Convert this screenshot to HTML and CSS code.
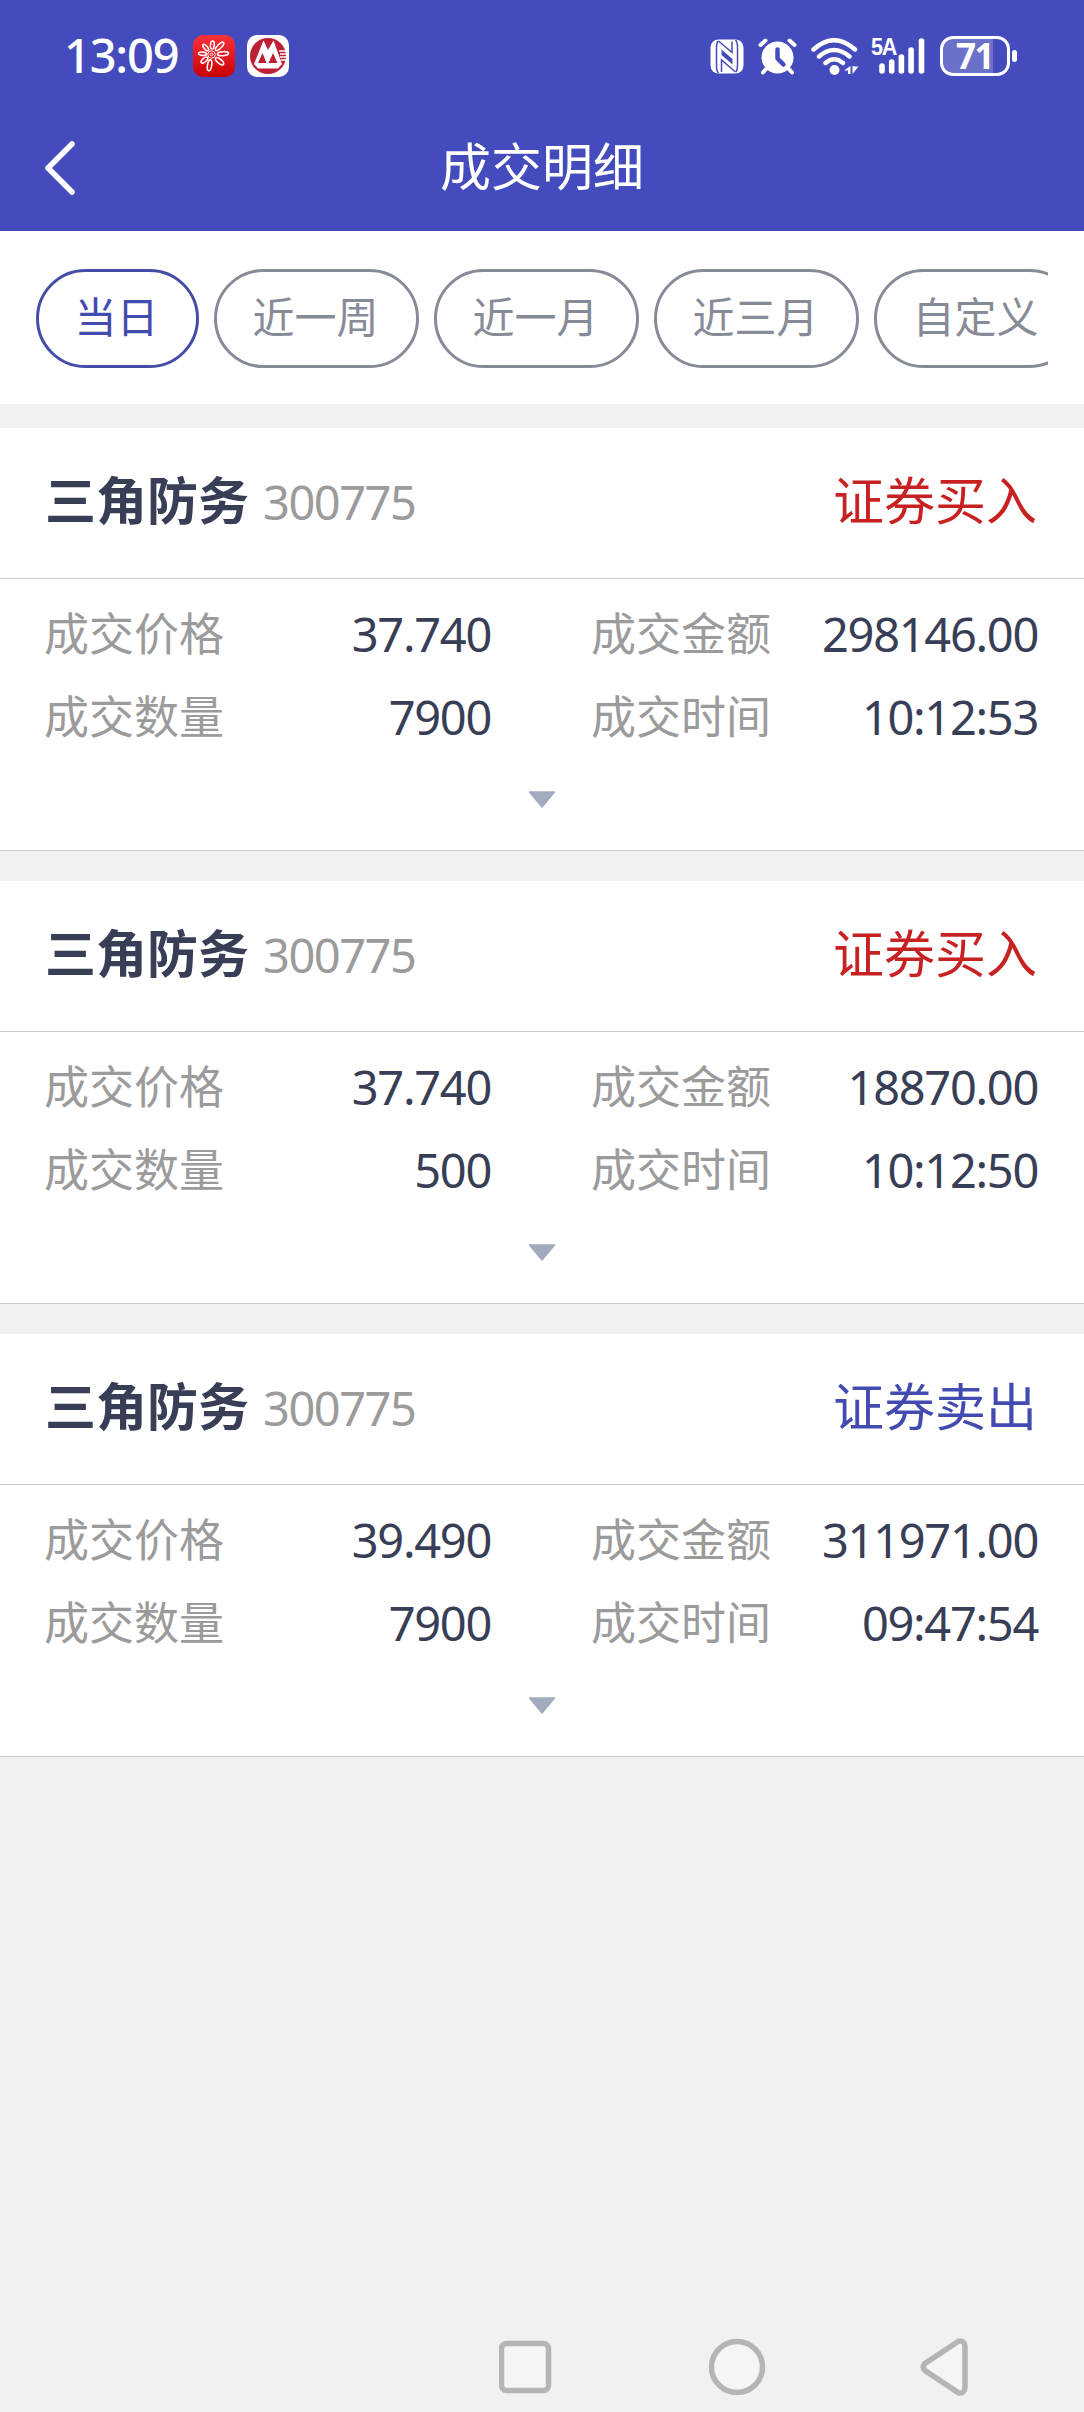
FILE: index.html
```html
<!DOCTYPE html>
<html lang="zh-CN">
<head>
<meta charset="utf-8">
<title>成交明细</title>
<link rel="stylesheet" href="styles.css">
</head>
<body>
<div class="screen">
  <header class="top">
    <div class="status">
      <span class="clock">13:09</span>
      <svg class="app" width="42" height="42" viewBox="0 0 42 42">
        <defs><linearGradient id="r" x1="0" y1="0" x2="0" y2="1"><stop offset="0" stop-color="#fb3238"/><stop offset="1" stop-color="#c90206"/></linearGradient></defs>
        <rect width="42" height="42" rx="10" fill="url(#r)"/>
        <g transform="translate(18.500 19.500)" fill="none" stroke="#fff" stroke-width="1.600">
          <ellipse cy="-9.500" rx="1.900" ry="4" transform="rotate(5)"/>
          <ellipse cy="-11.500" rx="2" ry="5.500" transform="rotate(45)"/>
          <ellipse cy="-11.500" rx="2" ry="5.500" transform="rotate(86)"/>
          <ellipse cy="-10.500" rx="2.100" ry="5" transform="rotate(130)"/>
          <ellipse cy="-11" rx="2.100" ry="5.500" transform="rotate(190)"/>
          <ellipse cy="-9" rx="1.900" ry="4" transform="rotate(232)"/>
          <ellipse cy="-9" rx="1.700" ry="4" transform="rotate(275)"/>
          <ellipse cy="-9" rx="1.700" ry="4" transform="rotate(320)"/>
          <circle r="3.700" stroke-width="1"/>
          <circle r="1.400" stroke-width="1"/>
        </g>
      </svg>
      <svg class="app" width="42" height="42" viewBox="0 0 42 42">
        <rect width="42" height="42" rx="10" fill="#fff"/>
        <circle cx="21" cy="21" r="18" fill="#bd1f35"/>
        <path d="M7 29 16.500 5.500 21 15 26.500 5.500 35 29 31 33.500H11z" fill="#fff"/>
        <path d="M11 28 15.500 18 19.500 28zM21.500 28 26 18 30.500 28z" fill="#bd1f35"/>
        <path d="M32 16h9M33 19h8M33 22h8M34 25h7" stroke="#fff" stroke-width="1.300"/>
      </svg>
      <div class="system">
        <svg width="34" height="35" viewBox="0 0 34 35">
          <rect x=".5" y=".5" width="33" height="34" rx="8" fill="#fff"/>
          <path d="M8 2Q6.500 4 6.500 9V27Q6.500 32 8.500 34M26 33Q27.500 31 27.500 26V8Q27.500 3 25.500 1" fill="none" stroke="#434bbd" stroke-width="1.500"/>
          <path d="M8.500 2 22 13.500V2.500M25.500 33 11.500 21V33" fill="none" stroke="#434bbd" stroke-width="1.500"/>
          <path d="M11.500 10.500 22.500 20v5.500L11.500 16z" fill="#434bbd"/>
        </svg>
        <svg class="alarm" width="39" height="37" viewBox="0 0 39 37">
          <circle cx="19.500" cy="19.500" r="16" fill="#fff"/>
          <path d="M2.500 7 7.500 2.500M36.500 7 31.500 2.500M5 34.500 9 30M34 34.500 30 30" stroke="#fff" stroke-width="4" stroke-linecap="round"/>
          <path d="M19.500 11.500v9l6 6" fill="none" stroke="#434bbd" stroke-width="4.500" stroke-linecap="round" stroke-linejoin="round"/>
        </svg>
        <svg class="wifi" width="48" height="37" viewBox="0 0 48 37">
          <g fill="none" stroke="#fff" stroke-width="4.400" stroke-linecap="round">
            <path d="M2.500 11.500Q23 -7 44 11.500M8 18.500Q23 5.500 38.500 18.500M14.500 25Q23 17.500 32 25"/>
          </g>
          <circle cx="23.500" cy="32" r="5" fill="#fff"/>
          <path d="M39.500 28v8H37v-3.500h-4zM41.500 28v8l6-7.500h-3.500z" fill="#fff"/>
        </svg>
        <div class="signal">
          <span class="net">5A</span>
          <svg width="46" height="36" viewBox="0 0 46 36"><path d="M3 28v5M12.700 24v9M22.400 19v14M32.100 12v21M42.500 3v30" stroke="#fff" stroke-width="5.600" stroke-linecap="round"/></svg>
        </div>
        <div class="battery"><span class="level">71</span></div><i class="cap"></i>
      </div>
    </div>
    <div class="titlebar">
      <svg class="back" width="34" height="56" viewBox="0 0 34 56"><path d="M30 4 6 28 30 52" fill="none" stroke="#fff" stroke-width="5.500" stroke-linecap="round" stroke-linejoin="round"/></svg>
      <h1>成交明细</h1>
    </div>
  </header>
  <nav class="tabs"><div class="track">
    <span class="chip on">当日</span><span class="chip">近一周</span><span class="chip">近一月</span><span class="chip">近三月</span><span class="chip">自定义</span>
  </div></nav>
  <main>
    <section class="card">
      <div class="head"><b>三角防务</b><span class="code">300775</span><span class="side buy">证券买入</span></div>
      <dl>
        <div><dt>成交价格</dt><dd>37.740</dd></div><div><dt>成交金额</dt><dd>298146.00</dd></div>
        <div><dt>成交数量</dt><dd>7900</dd></div><div><dt>成交时间</dt><dd>10:12:53</dd></div>
      </dl>
      <svg class="more" width="28" height="18" viewBox="0 0 28 18"><path d="M1.500 1h25L14 16z"/></svg>
    </section>
    <section class="card">
      <div class="head"><b>三角防务</b><span class="code">300775</span><span class="side buy">证券买入</span></div>
      <dl>
        <div><dt>成交价格</dt><dd>37.740</dd></div><div><dt>成交金额</dt><dd>18870.00</dd></div>
        <div><dt>成交数量</dt><dd>500</dd></div><div><dt>成交时间</dt><dd>10:12:50</dd></div>
      </dl>
      <svg class="more" width="28" height="18" viewBox="0 0 28 18"><path d="M1.500 1h25L14 16z"/></svg>
    </section>
    <section class="card">
      <div class="head"><b>三角防务</b><span class="code">300775</span><span class="side sell">证券卖出</span></div>
      <dl>
        <div><dt>成交价格</dt><dd>39.490</dd></div><div><dt>成交金额</dt><dd>311971.00</dd></div>
        <div><dt>成交数量</dt><dd>7900</dd></div><div><dt>成交时间</dt><dd>09:47:54</dd></div>
      </dl>
      <svg class="more" width="28" height="18" viewBox="0 0 28 18"><path d="M1.500 1h25L14 16z"/></svg>
    </section>
  </main>
  <footer class="keys">
    <svg width="54" height="60" viewBox="0 0 54 60"><rect x="2.500" y="6.500" width="47" height="47" rx="5"/></svg>
    <svg width="58" height="60" viewBox="0 0 58 60"><circle cx="29" cy="30" r="25.500"/></svg>
    <svg width="50" height="60" viewBox="0 0 50 60"><path d="M38.500 4.200 5 26.500Q1.500 30 5 33.500L38.500 55.800Q44.800 57 45 50V10Q44.800 3 38.500 4.200z"/></svg>
  </footer>
</div>
</body>
</html>
```

FILE: styles.css
```css
* { box-sizing: border-box; margin: 0; padding: 0; }
body { background: #f1f1f1; font-family: "Noto Sans", "Noto Sans CJK SC", sans-serif; }
svg { display: block; flex: none; }
.screen { width: 1084px; height: 2412px; display: flex; flex-direction: column; overflow: hidden; }

.top { height: 231px; flex: none; background: #434bbd; color: #fff; }
.status { height: 112px; padding: 0 67px 0 64px; display: flex; align-items: center; }
.clock { width: 129px; padding-bottom: 2px; font-size: 47px; font-weight: 500; line-height: 60px; letter-spacing: -1.200px; white-space: nowrap; }
.app { margin-right: 12px; }
.system { margin-left: auto; display: flex; align-items: center; }
.alarm { margin-left: 14px; }
.wifi { margin-left: 14px; }
.signal { position: relative; margin-left: 20px; }
.net { position: absolute; left: -8px; top: -5px; font: 700 24px/28px "Liberation Sans", sans-serif; letter-spacing: -1.500px; transform: scaleX(.9); transform-origin: left; }
.battery { width: 70px; height: 40px; margin-left: 15px; border: 3px solid #fff; border-radius: 13px; background: linear-gradient(to right, #6b71c9 50px, transparent 50px); display: flex; align-items: center; }
.level { padding-left: 13px; font: 700 35px/34px "Noto Sans", sans-serif; letter-spacing: -1.500px; }
.cap { width: 5px; height: 12px; margin-left: 2px; border-radius: 3px; background: #fff; }
.titlebar { height: 112px; padding-left: 42px; display: grid; grid-template-columns: 34px 1fr 76px; align-items: center; }
.titlebar h1 { padding-bottom: 4px; font-size: 51px; line-height: 60px; font-weight: 400; text-align: center; }

.tabs { height: 173px; flex: none; padding: 38px 36px 0; background: #fff; }
.track { display: flex; gap: 15px; overflow: hidden; }
.chip { height: 99px; flex: none; padding: 0 37.5px 0 35.5px; border: 3px solid #878b97; border-radius: 50px; color: #878b97; font-size: 42px; line-height: 90px; white-space: nowrap; }
.chip.on { border-color: #434da5; color: #434bb0; }

main { display: flex; flex-direction: column; gap: 30px; padding-top: 24px; }
.card { height: 423px; background: #fff; border-bottom: 1px solid #c9c9c9; }
.head { height: 151px; padding: 0 47px 6px 45px; border-bottom: 1px solid #c9c9c9; display: flex; align-items: center; }
.head b { color: #383e56; font-size: 51px; line-height: 70px; }
.code { padding-top: 3px; margin-left: 14px; color: #9b9b9b; font-size: 47px; line-height: 60px; letter-spacing: -1.500px; }
.side { margin-left: auto; font-size: 51px; line-height: 70px; }
.buy { color: #c72121; }
.sell { color: #434bb0; }
dl { padding: 13px 46px 0 44px; display: grid; grid-template-columns: 1fr 1fr; column-gap: 100px; }
dl div { height: 83px; display: flex; justify-content: space-between; align-items: center; }
dt { padding-top: 1px; color: #9b9b9b; font-size: 45px; line-height: 60px; }
dd { color: #383e56; font-size: 47px; line-height: 60px; letter-spacing: -1.300px; }
.more { margin: 33px auto 0; fill: #a2abbd; stroke: #a2abbd; stroke-width: 1.500px; stroke-linejoin: round; }

.keys { margin-top: auto; height: 76px; padding: 1px 114px 0 499px; display: flex; justify-content: space-between; fill: #f5f5f5; stroke: #b5b5b5; stroke-width: 5.500px; }
```
